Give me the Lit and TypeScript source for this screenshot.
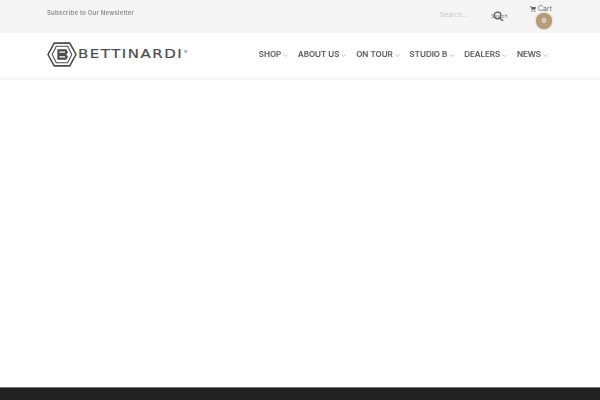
import { html, css, LitElement } from 'lit';
import { customElement } from 'lit/decorators.js';

const NAV = ['SHOP', 'ABOUT US', 'ON TOUR', 'STUDIO B', 'DEALERS', 'NEWS'];

@customElement('app-root')
export class AppRoot extends LitElement {
  static styles = css`
    :host {
      display: flex;
      flex-direction: column;
      height: 400px;
      overflow: hidden;
      background: #fff;
      font-family: Inter, 'Liberation Sans', sans-serif;
      color: #4a4a4a;
    }

    .top {
      height: 33px;
      flex: none;
      background: #f5f5f5;
      display: flex;
      padding: 0 48px 0 47px;
    }

    .subscribe {
      font-size: 6px;
      font-weight: 600;
      letter-spacing: 0.2px;
      color: #8b8b8b;
      line-height: 25px;
      flex: 1;
      will-change: opacity;
    }

    .search {
      width: 91px;
      display: flex;
      align-items: flex-start;
      padding-top: 11px;
      box-sizing: border-box;
      font-size: 6.5px;
      line-height: 9px;
      will-change: opacity;
    }

    .placeholder {
      color: #c4c4c4;
      letter-spacing: 0.1px;
      flex: 1;
    }

    .search-btn {
      width: 16px;
      margin-right: 24px;
      padding-top: 1px;
      color: #777;
      white-space: nowrap;
      font-size: 5px;
      position: relative;
    }

    .search-btn svg {
      position: absolute;
      left: 1px;
      top: -1px;
    }

    .cart {
      display: flex;
      flex-direction: column;
      align-items: flex-end;
      width: 21px;
      padding-top: 4px;
      will-change: opacity;
    }

    .cart-label {
      display: flex;
      align-items: center;
      gap: 2px;
      font-size: 7px;
      line-height: 9px;
      color: #6a6a6a;
    }

    .badge {
      width: 16px;
      height: 16px;
      border-radius: 50%;
      background: #b79a78;
      box-shadow: 0 0 2px rgba(120, 95, 65, 0.6);
      color: #fff;
      font-size: 6px;
      font-weight: 700;
      line-height: 16px;
      text-align: center;
    }

    .header {
      height: 45px;
      flex: none;
      display: flex;
      align-items: center;
      justify-content: space-between;
      box-sizing: border-box;
      padding: 0 52px 3px 47px;
      box-shadow: 0 1px 2px rgba(0, 0, 0, 0.08);
    }

    .logo {
      display: flex;
      align-items: center;
      gap: 1px;
      color: #4b4b4b;
    }

    .wordmark {
      font-family: 'DejaVu Sans', sans-serif;
      font-size: 12.5px;
      line-height: 16px;
      letter-spacing: 1.25px;
      -webkit-text-stroke: 0.2px #4b4b4b;
      color: #4b4b4b;
      transform: scaleX(1.2);
      transform-origin: left center;
    }

    .reg {
      font-size: 4px;
      vertical-align: top;
      letter-spacing: 0;
      line-height: 12px;
      -webkit-text-stroke: 0;
    }

    nav {
      display: flex;
      gap: 9.8px;
      will-change: opacity;
    }

    .item {
      display: flex;
      align-items: center;
      gap: 2px;
      font-size: 8px;
      font-weight: 500;
      -webkit-text-stroke: 0.15px #555;
      color: #555;
      white-space: nowrap;
    }

    .item svg {
      margin-top: 3px;
    }

    main {
      flex: 1;
    }

    footer {
      height: 13px;
      flex: none;
      background: #222;
      border-top: 1px solid #777;
      box-sizing: border-box;
    }
  `;

  render() {
    return html`
      <div class="top">
        <div class="subscribe">Subscribe to Our Newsletter</div>
        <div class="search">
          <span class="placeholder">Search...</span>
          <span class="search-btn">Search
            <svg width="12" height="12" viewBox="0 0 12 12" fill="none" stroke="#555" stroke-width="1.2">
              <circle cx="5.500" cy="5.500" r="3.400"></circle>
              <path d="M8 8l3 3"></path>
            </svg>
          </span>
        </div>
        <div class="cart">
          <div class="cart-label">
            <svg width="6" height="6" viewBox="0 0 6 6" fill="#666">
              <path d="M0 0h1l.3 1H6L5.300 3.800H1.600L.7.7H0z"></path>
              <circle cx="2" cy="5.200" r=".7"></circle>
              <circle cx="4.700" cy="5.200" r=".7"></circle>
            </svg>
            Cart
          </div>
          <div class="badge">0</div>
        </div>
      </div>
      <div class="header">
        <div class="logo">
          <svg width="30" height="25" viewBox="0 0 29 24" fill="none" stroke="#4b4b4b">
            <path d="M7 1h15l6 11-6 11H7L1 12z" stroke-width="1.500"></path>
            <path d="M9 4h11l4 8-4 8H9l-4-8z" stroke-width="1"></path>
            <path d="M10 7h8.500l1.500 2v1.500l-1.500 1.500 1.500 1.500V15l-1.500 2H10z" fill="#4b4b4b" stroke="none"></path>
            <path d="M12 9.700h5.500M12 14.300h5.500" stroke="#fff" stroke-width="1.200"></path>
          </svg>
          <span class="wordmark">BETTINARDI<sup class="reg">®</sup></span>
        </div>
        <nav>
          ${NAV.map(
            (n) => html`<div class="item">${n}
              <svg width="5" height="3" viewBox="0 0 5 3" fill="none" stroke="#aaa" stroke-width=".7"><path d="M.5.500L2.500 2.500 4.500.5"></path></svg>
            </div>`
          )}
        </nav>
      </div>
      <main></main>
      <footer></footer>
    `;
  }
}
